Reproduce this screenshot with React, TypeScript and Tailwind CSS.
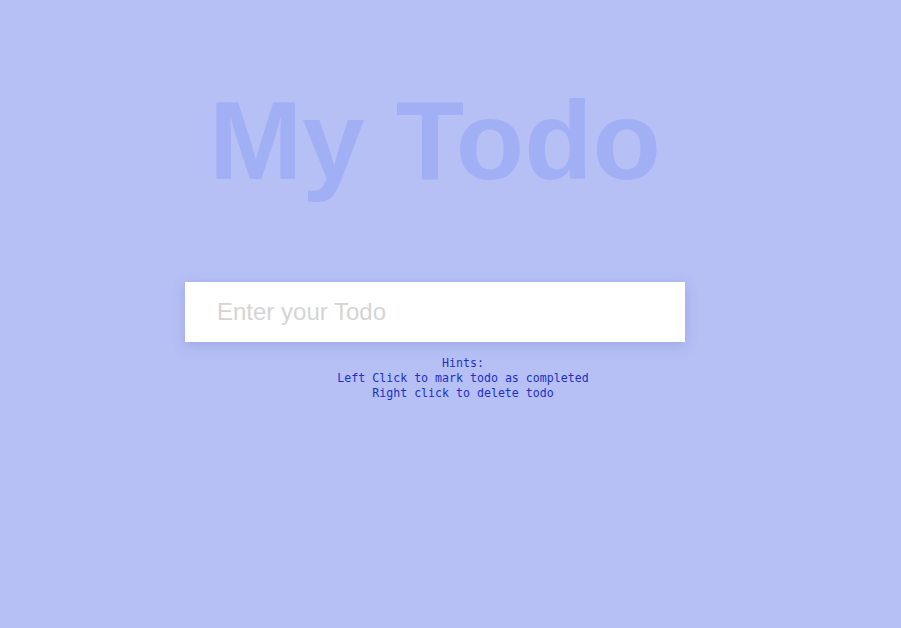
function App() {
  return (
    <main className="min-h-screen w-full bg-[#b6c0f5]">
      <div className="flex w-[870px] flex-col items-center pt-[85px]">
        <h1 className="font-['Liberation_Sans',Arial,sans-serif] text-[112px] font-bold leading-none text-[#a1aff5]">
          My Todo
        </h1>

        <form className="mt-[85px] w-[500px]" onSubmit={(e) => e.preventDefault()}>
          <input
            type="text"
            placeholder="Enter your Todo"
            className="h-[60px] w-full bg-white px-8 font-['Liberation_Sans',Arial,sans-serif] text-2xl text-gray-700 shadow-[0_3px_12px_rgba(80,90,180,0.25)] outline-none placeholder:text-[#d4d4d4]"
          />
        </form>

        <div className="mt-[14px] pl-[56px] text-center font-['DejaVu_Sans_Mono',monospace] text-[11.6px] leading-[15px] text-[#1e2fc2]">
          <p>Hints:</p>
          <p>Left Click to mark todo as completed</p>
          <p>Right click to delete todo</p>
        </div>
      </div>
    </main>
  );
}

export default App;
